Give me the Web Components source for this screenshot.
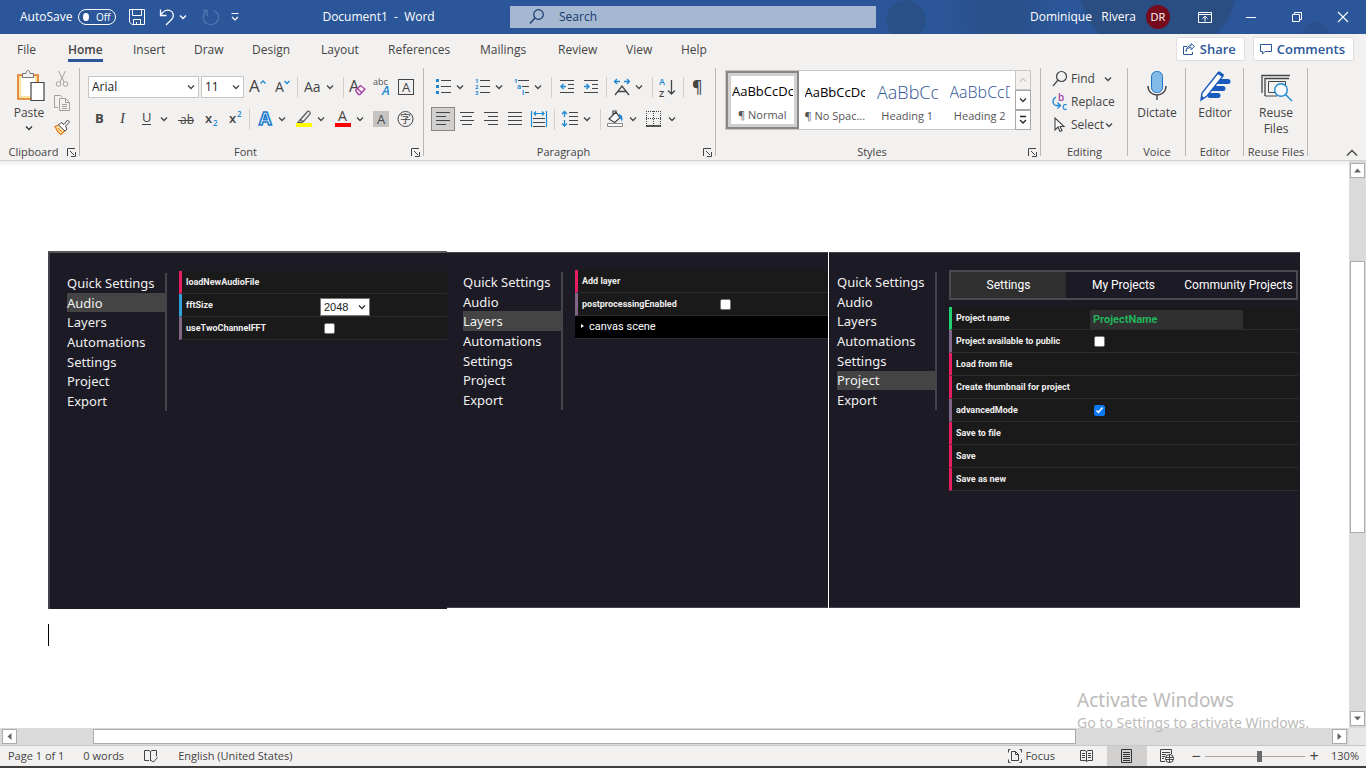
<!DOCTYPE html>
<html lang="en">
<head>
<meta charset="utf-8">
<title>Document1 - Word</title>
<style>
html,body{margin:0;height:100%}
body{font:12px/16px "Open Sans","Noto Sans",sans-serif;color:#444;background:#fff;overflow:hidden}
</style>
</head>
<body>
<word-app></word-app>
<script>
const define = (name, css, html, setup) => customElements.define(name, class extends HTMLElement {
  connectedCallback() {
    if (this.shadowRoot) return;
    const root = this.attachShadow({ mode: 'open' });
    const t = document.createElement('template');
    t.innerHTML = `<style>*{box-sizing:border-box}button,input,select{font:inherit;color:inherit;margin:0}${css}</style>` +
      (typeof html === 'function' ? html(this) : html);
    root.append(t.content.cloneNode(true));
    if (setup) setup(this, root);
  }
});

const S = 'fill="none" stroke="#444"', B = '#1e88d2';
const lines = (...l) => `<path ${S} d="${l.map(([x, y, w]) => `M${x} ${y}.5h${w}`).join('')}"/>`;
/* name: [width, height, markup] */
const ICONS = {
  save: [18, 18, `<path fill="none" stroke="#fff" d="M1.500 1.500h15v15h-12.500l-2.500-2.500zM4.500 1.500v6h9v-6M5.500 16.500v-5h7v5M8.500 14v2.500"/>`],
  undo: [18, 18, `<path fill="none" stroke="#fff" stroke-width="1.300" d="M2.500 1.500v6h6M2.500 7.500C5 3 9 1.500 12 2.500c4 1.500 4 6 2 8.500L8 17"/>`],
  redo: [18, 18, `<path fill="none" stroke="#4f75b0" stroke-width="1.300" d="M5 3C0 6 0 14 6 16c6 2 11-2 10.500-7.500C16 5.500 14 3.500 12 3M5 8V2.500H1"/>`],
  chevw: [10, 8, `<path fill="none" stroke="#fff" stroke-width="1.400" d="M2 2.500l3 3 3-3"/>`],
  custom: [10, 10, `<path fill="none" stroke="#fff" stroke-width="1.200" d="M1.500 1.500h7M2 5l3 3 3-3"/>`],
  search: [16, 16, `<g fill="none" stroke="#17386e" stroke-width="1.200"><circle cx="9.500" cy="5.500" r="4.800"/><path d="M6 9L1 14.500"/></g>`],
  ribbonopt: [14, 12, `<path fill="none" stroke="#fff" d="M.5 1.500h13v10H.5zM.5 3.500h13M7 10.500V5.500M4.500 7.500L7 5.200l2.500 2.300"/>`],
  min: [12, 12, `<path stroke="#fff" d="M1 6.500h10"/>`],
  restore: [12, 12, `<path fill="none" stroke="#fff" d="M1.500 3.500h7v7h-7zM3.500 3.500v-2h7v7h-2"/>`],
  close: [12, 12, `<path stroke="#fff" stroke-width="1.100" d="M1 1l10 10M11 1L1 11"/>`],
  share: [12, 12, `<path fill="none" stroke="#2b579a" d="M4 3.500H.5v8h9V9M3 8.500c.5-3 2.500-4 5-4v2.200l3.500-3.200L8 .6v2C5 2.600 3.500 5 3 8.500z"/>`],
  comment: [12, 12, `<path fill="none" stroke="#2b579a" d="M.5 1.500h11v7H5l-2.500 2.500V8.500h-2z"/>`],
  chev: [12, 24, `<path ${S} stroke-width="1.300" d="M2 10.500l3 3 3-3"/>`],
  chevs: [12, 12, `<path ${S} stroke-width="1.300" d="M2 4.500l3 3 3-3"/>`],
  paste: [30, 32, `<path fill="#fbe3a5" stroke="#e07a1c" stroke-width="1.600" d="M4 5h20v24H4z"/><path fill="#fff" d="M7 8h14v18H7z"/><path fill="#f3f1f0" stroke="#777" d="M8.500 7.500v-4h3.500c0-4 4-4 4 0h3.500v4z"/><path fill="#fff" stroke="#444" stroke-width="1.200" d="M17 12.500h13v18H17z"/>`],
  cut: [16, 18, `<g fill="none" stroke="#a3a1a0"><path d="M4.500 1l5.500 11M11.500 1L6 12"/><circle cx="4.500" cy="14" r="2.300"/><circle cx="11.500" cy="14" r="2.300"/></g>`],
  copy: [18, 18, `<g fill="none" stroke="#a3a1a0"><path d="M5 13.500H1.500V1.500h6l2 2"/><path d="M6.500 4.500h6l4 4v8h-10zM12.500 4.500v4h4M9 10.500h5M9 12.500h5M9 14.500h5"/></g>`],
  painter: [18, 18, `<path fill="#fbe3a5" stroke="#e07a1c" stroke-width="1.300" d="M2 8.500l5-2 5.500 5.500L8 16.500c-2-1-4-4-6-8z"/><path fill="#fff" stroke="#444" d="M5.500 7L8 4.500l3 2L14.500 2l2 2L12.500 8l1.500 3-2 2z"/><path stroke="#e07a1c" d="M5 10l4 4"/>`],
  grow: [24, 24, `<text x="3" y="17" font-size="17">A</text><path fill="none" stroke="${B}" stroke-width="1.400" d="M14.500 8.500L17 6l2.500 2.500"/>`],
  shrink: [24, 24, `<text x="5" y="17" font-size="14">A</text><path fill="none" stroke="${B}" stroke-width="1.400" d="M14.500 6L17 8.500 19.500 6"/>`],
  case: [24, 24, `<text x="3" y="17" font-size="14">Aa</text>`],
  clear: [24, 24, `<text x="2" y="17" font-size="16">A</text><path fill="#f3f1f0" stroke="#a33ea1" stroke-width="1.300" d="M8.500 15.500l5-5 4.500 3.500-5 5.500h-1.500zM10.500 13.500l4 4"/>`],
  phonetic: [24, 24, `<text x="2" y="10" font-size="9" fill="#555">abc</text><text x="11" y="20" font-size="13" font-style="italic" font-weight="600" fill="${B}">A</text>`],
  boxa: [24, 24, `<rect x="3.500" y="4.500" width="15" height="15" ${S}/><text x="7" y="17" font-size="13">A</text>`],
  bold: [24, 24, `<text x="8" y="16" font-size="13" font-weight="700">B</text>`],
  italic: [24, 24, `<text x="9" y="16" font-size="15" font-style="italic" font-family="Liberation Serif">I</text>`],
  under: [24, 24, `<text x="7" y="15" font-size="13">U</text><path stroke="#444" d="M7 17.500h9"/>`],
  strike: [24, 24, `<text x="6" y="17" font-size="12">ab</text><path stroke="#444" d="M4 13.500h16"/>`],
  sub: [24, 24, `<text x="7" y="16" font-size="13" font-weight="600">x</text><text x="15" y="19" font-size="8" font-weight="600" fill="${B}">2</text>`],
  sup: [24, 24, `<text x="7" y="16" font-size="13" font-weight="600">x</text><text x="15" y="10" font-size="8" font-weight="600" fill="${B}">2</text>`],
  fx: [24, 24, `<text x="6" y="18" font-size="18" font-weight="700" fill="#fff" stroke="#1c7cd0" stroke-width="1.600">A</text>`],
  mark: [24, 24, `<path fill="#f3f1f0" stroke="#555" stroke-width="1.200" d="M9 12l6.500-7.500c1-1 3.500.5 2.500 2.500L12 14H9zM8.500 12L6 15.500h4l2-1.500"/><path fill="#ff0" d="M4 16h16v4H4z"/>`],
  color: [24, 24, `<text x="7" y="14" font-size="14">A</text><path fill="#f00" d="M4 16h16v4H4z"/>`],
  shade: [24, 24, `<path fill="#c6c4c3" d="M3 4h16v16H3z"/><text x="7" y="17" font-size="13">A</text>`],
  enclose: [24, 24, `<circle cx="11.500" cy="12" r="7.500" ${S}/><text x="6" y="16" font-size="11" font-family="Noto Sans CJK SC">字</text>`],
  bullets: [24, 24, `<path fill="${B}" d="M5 4h3v3H5zM5 10h3v3H5zM5 16h3v3H5z"/>${lines([10, 5, 10], [10, 11, 10], [10, 17, 10])}`],
  numbers: [24, 24, `<g font-size="6" font-weight="700"><text x="5" y="8" fill="${B}">1</text><text x="5" y="14" fill="${B}">2</text><text x="5" y="20" fill="${B}">3</text></g>${lines([10, 5, 10], [10, 11, 10], [10, 17, 10])}`],
  levels: [24, 24, `<text x="5" y="8" font-size="6" font-weight="700" fill="${B}">1</text><text x="8" y="14" font-size="7" font-weight="700" fill="${B}">a</text><text x="13" y="20" font-size="7" font-weight="700" fill="${B}">i</text>${lines([9, 5, 11], [13, 11, 7], [16, 17, 4])}`],
  outdent: [24, 24, `${lines([5, 5, 14], [13, 9, 6], [13, 13, 6], [5, 17, 14])}<path fill="none" stroke="${B}" stroke-width="1.400" d="M11 11.500H6M8.500 9L6 11.500 8.500 14"/>`],
  indent: [24, 24, `${lines([5, 5, 14], [13, 9, 6], [13, 13, 6], [5, 17, 14])}<path fill="none" stroke="${B}" stroke-width="1.400" d="M5 11.500h5M7.500 9l2.500 2.500L7.500 14"/>`],
  asian: [24, 24, `<path fill="none" stroke="#444" stroke-width="1.300" d="M5 20l7-9 7 9M8 16.500h8"/><path fill="none" stroke="${B}" stroke-width="1.300" d="M10 6.500H4.500M7 4L4.500 6.500 7 9M14 6.500h5.500M17 4l2.500 2.500L17 9"/>`],
  sort: [24, 24, `<text x="3" y="10" font-size="9" font-weight="600" fill="${B}">A</text><text x="3" y="22" font-size="9" font-weight="600">Z</text><path fill="none" stroke="#444" stroke-width="1.300" d="M15.500 5v14M12 15.500l3.500 3.500 3.500-3.500"/>`],
  pilcrow: [24, 24, `<text x="5" y="17" font-size="16" font-weight="600">¶</text>`],
  left: [24, 24, lines([5, 5, 14], [5, 9, 10], [5, 13, 14], [5, 17, 10])],
  center: [24, 24, lines([5, 5, 14], [7, 9, 10], [5, 13, 14], [7, 17, 10])],
  right: [24, 24, lines([5, 5, 14], [9, 9, 10], [5, 13, 14], [9, 17, 10])],
  justify: [24, 24, lines([5, 5, 14], [5, 9, 14], [5, 13, 14], [5, 17, 14])],
  distribute: [24, 24, `${lines([6, 11, 12], [6, 15, 12], [6, 19, 12])}<path fill="none" stroke="${B}" stroke-width="1.200" d="M4.500 4v16M19.500 4v16M7 6.500h10M9 4.500L7 6.500l2 2M15 4.500l2 2-2 2"/>`],
  spacing: [24, 24, `${lines([11, 5, 9], [11, 9, 9], [11, 13, 9], [11, 17, 9])}<path fill="none" stroke="${B}" stroke-width="1.300" d="M6.500 5v5M4 7l2.500-2.500L9 7M6.500 13v6M4 16.500L6.500 19 9 16.500"/>`],
  bucket: [24, 24, `<path fill="#fff" stroke="#444" stroke-width="1.200" d="M5 12l7-7 4 6-5.500 4.500zM9 7.500V4h3v3"/><path fill="${B}" d="M15 7c4 1 4 5 3 8-1-2-1-4-3-5z"/><path fill="#fff" stroke="#888" d="M3.500 16.500h15v3h-15z"/>`],
  borders: [24, 24, `<path fill="none" stroke="#444" stroke-dasharray="1 1" d="M3 4.500h15M3.500 4v15M17.500 4v15M10.500 4v15M3 11.500h15"/><path stroke="#222" stroke-width="1.500" d="M3 19h15"/>`],
  launch: [9, 9, `<path ${S} d="M.5 8V.5H8M3 3l4 4M8.500 4v4.500H4"/>`],
  find: [16, 18, `<g ${S} stroke-width="1.200"><circle cx="9.500" cy="6.500" r="5"/><path d="M6 10L1 16"/></g>`],
  replace: [16, 18, `<text x="6" y="8" font-size="10" font-weight="600" fill="#a33ea1">b</text><text x="10" y="17" font-size="10" font-weight="600" fill="${B}">c</text><path fill="none" stroke="${B}" stroke-width="1.300" d="M4 4C0 6 0 11 4 12.500h4M5.500 9.500l3 3-3 3"/>`],
  select: [16, 18, `<path fill="#fff" stroke="#444" stroke-width="1.100" d="M3 2v12l3-3 2 4.500 2-1-2-4h4z"/>`],
  mic: [20, 32, `<rect x="4.500" y="1.500" width="11" height="21" rx="5" fill="#83bbe8" stroke="#1e74c4"/><path ${S} stroke-width="1.400" d="M1 16c0 12 18 12 18 0M10 25v5"/>`],
  editor: [32, 32, `<path stroke="#185abd" stroke-width="5" stroke-linecap="round" d="M17 11.500h12M14 18.500h10M11 25.500h8"/><path fill="#fff" stroke="#185abd" stroke-width="1.400" d="M19 3l5 3L8 26l-6 4 1-7z"/><path fill="#185abd" d="M20 1l5 3.500-2 2.500-5-3.500zM2 30l1-4 2.500 2z"/>`],
  reuse: [32, 32, `<path ${S} stroke-width="1.300" d="M2 23V5.500h28M5 26V8.500h24"/><path ${S} d="M5 26h12M8.500 22.500V11.500h17v11z"/><circle cx="21" cy="20" r="6.300" fill="#f8fbff" stroke="${B}" stroke-width="1.400"/><path stroke="${B}" stroke-width="1.400" d="M25.500 24.500L32 31"/>`],
  up: [12, 8, `<path ${S} stroke-width="1.300" d="M1 6.500l5-5 5 5"/>`],
  gup: [8, 6, `<path fill="none" stroke="#aaa" d="M1 4.500l3-3 3 3"/>`],
  gdown: [8, 6, `<path fill="none" stroke="#333" stroke-width="1.300" d="M1 1.500l3 3 3-3"/>`],
  gmore: [8, 10, `<path fill="none" stroke="#222" stroke-width="1.300" d="M1 1.500h6M1 5l3 3 3-3"/>`],
  tu: [9, 9, `<path fill="#666" d="M1 6.500h7L4.500 2.500z"/>`],
  td: [9, 9, `<path fill="#666" d="M1 2.500h7L4.500 6.500z"/>`],
  tl: [9, 9, `<path fill="#666" d="M6.500 1v7L2.500 4.500z"/>`],
  tr: [9, 9, `<path fill="#666" d="M2.500 1v7l4-3.500z"/>`],
  proof: [16, 14, `<path ${S} d="M7.500 2.500L6 1.500H1.500v10H6M7.500 11.500v-9l1.500-1h4.500v6M7 11.500h1l2.500 1.500 4-4.500"/>`],
  focus: [16, 14, `<path ${S} d="M3.500.5h-2v3M12.500.5h2v3M3.500 13.500h-2v-3M12.500 13.500h2v-3M4.500 2.500h4l3 3v6h-7zM8.500 2.500v3h3"/>`],
  read: [16, 14, `<path ${S} d="M7.500 12.500v-10L6 1.500H1.500v10H6zM7.500 12.500l1.500-1h4.500v-10H9l-1.500 1M3 4.500h3M3 6.500h3M3 8.500h3M9 4.500h3M9 6.500h3M9 8.500h3"/>`],
  print: [14, 14, `<path fill="none" stroke="#333" d="M1.500.5h10v13h-10zM3 3.500h7M3 5.500h7M3 7.500h7M3 9.500h7M3 11.500h7"/>`],
  web: [16, 14, `<path ${S} d="M6 12.500H1.500V.5h11V5M3 3.500h8M3 5.500h4M3 7.500h3M3 9.500h2"/><circle cx="10.500" cy="9.500" r="4" fill="#fff" stroke="#333"/><path ${S} d="M6.500 8.500h8M6.500 10.500h8M10.500 5.500v8"/>`]
};

define('ui-icon', `:host{display:block;flex:none}svg{display:block;overflow:visible;fill:#444}`,
  el => {
    const [w, h, body] = ICONS[el.getAttribute('name')];
    return `<svg width="${w}" height="${h}" viewBox="0 0 ${w} ${h}" font-family="Open Sans,sans-serif" aria-hidden="true">${body}</svg>`;
  });

define('tool-button', `:host{display:block;flex:none}
  button{display:grid;place-items:center;width:24px;height:24px;padding:0;border:0;background:none}
  :host([narrow]) button{width:12px;margin-right:3px}
  :host([pressed]) button{background:#d2d0ce;outline:1px solid #8a8886;outline-offset:-1px}
  :host([wide]) button{width:46px;height:34px}`,
  el => `<button aria-label="${el.getAttribute('label') || el.getAttribute('icon')}"><ui-icon name="${el.getAttribute('icon')}"></ui-icon></button>`);

define('tool-rule', `:host{display:block;flex:none;width:7px;height:21px;background:linear-gradient(#d2d0ce,#d2d0ce) center/1px 100% no-repeat}`, '');

define('title-bar', `:host{display:grid;grid-template-columns:1fr 366px 1fr;align-items:center;height:34px;padding-left:20px;flex:none;color:#fff;
    background:radial-gradient(circle at 906px 20px,#2a5088 19px,transparent 21px),radial-gradient(circle at 1000px 10px,#2a508a 20px,transparent 60px),radial-gradient(circle at 1158px -20px,#2a4d82 78px,transparent 82px),radial-gradient(circle at 1316px 36px,#2a5090 14px,transparent 15px),#2b579a}
  .side{display:flex;align-items:center}
  .auto{display:flex;align-items:center;gap:6px}
  .switch{display:flex;align-items:center;gap:7px;width:38px;height:16px;padding:0 5px 0 4px;border:1px solid #fff;border-radius:8px;background:none;font-size:10px;line-height:14px}
  .switch i{width:8px;height:8px;border-radius:50%;background:#fff}
  .quick{display:grid;grid-template-columns:30px 20px 24px 28px 14px;align-items:center;margin-left:12px}
  h1{font:inherit;margin:0 0 0 78px;white-space:pre}
  .search{display:flex;align-items:center;gap:14px;height:22px;padding-left:19px;background:#a5b8d2}
  input{flex:1;min-width:0;border:0;padding:0;background:none;color:#17386e;outline:0;line-height:20px}
  input::placeholder{color:#17386e;opacity:1}
  .right{justify-content:flex-end}
  .name{white-space:pre;margin-right:10px}
  .avatar{display:grid;place-items:center;width:24px;height:24px;margin-right:12px;border-radius:50%;background:#750b1c;font-size:11px}`,
  `<div class="side"><span class="auto"><span id="as">AutoSave</span><button class="switch" aria-labelledby="as"><i></i>Off</button></span>
    <span class="quick"><ui-icon name="save"></ui-icon><ui-icon name="undo"></ui-icon><ui-icon name="chevw"></ui-icon><ui-icon name="redo"></ui-icon><ui-icon name="custom"></ui-icon></span>
    <h1>Document1  -  Word</h1></div>
  <label class="search"><ui-icon name="search"></ui-icon><input type="text" placeholder="Search" aria-label="Search"></label>
  <div class="side right"><span class="name">Dominique   Rivera</span><span class="avatar">DR</span>
    <tool-button wide icon="ribbonopt" label="Ribbon display options"></tool-button><tool-button wide icon="min" label="Minimize"></tool-button><tool-button wide icon="restore" label="Restore"></tool-button><tool-button wide icon="close" label="Close"></tool-button></div>`);

define('ribbon-tabs', `:host{display:flex;justify-content:space-between;height:30px;flex:none;padding:0 12px 0 17px;background:#f3f1f0}
  nav{display:grid;grid-template-columns:51px 65px 61px 58px 69px 67px 92px 78px 68px 55px 40px}
  a{color:#444;text-decoration:none;line-height:25px;padding-top:3px;height:28px;justify-self:start}
  a[aria-current]{font-weight:600;border-bottom:3px solid #2b579a}
  .actions{display:flex;gap:8px;padding-top:3px}
  button{display:flex;align-items:center;gap:5px;height:24px;padding:0 8px 0 6px;border:1px solid #e1dfdd;border-radius:2px;background:#fff;color:#2b579a;font-size:13px;font-weight:600;white-space:nowrap}`,
  `<nav>${['File', 'Home', 'Insert', 'Draw', 'Design', 'Layout', 'References', 'Mailings', 'Review', 'View', 'Help'].map(t => `<a href="#"${t === 'Home' ? ' aria-current="page"' : ''}>${t}</a>`).join('')}</nav>
  <div class="actions"><button><ui-icon name="share"></ui-icon>Share</button><button><ui-icon name="comment"></ui-icon>Comments</button></div>`);

define('ribbon-group', `:host{display:flex;flex-direction:column;height:92px;background:linear-gradient(#b9b7b6,#b9b7b6) right top/1px 88px no-repeat}
  .body{flex:1;min-height:0}
  .foot{display:flex;align-items:center;height:16px;font-size:11px;white-space:nowrap}
  .foot span{flex:1;text-align:center}
  .foot button{border:0;background:none;padding:0;margin-right:4px}`,
  el => `<div class="body"><slot></slot></div><div class="foot"><span>${el.getAttribute('label')}</span>${el.hasAttribute('launcher') ? `<button aria-label="${el.getAttribute('label')} options"><ui-icon name="launch"></ui-icon></button>` : ''}</div>`);

const tools = (...names) => names.map(n => n === '|' ? '<tool-rule></tool-rule>' : n === 'v' ? '<tool-button narrow icon="chev" label="More"></tool-button>' :
  n === 'left' ? '<tool-button pressed icon="left"></tool-button>' : `<tool-button icon="${n}"></tool-button>`).join('');

define('big-button', `:host{display:block}button{display:flex;flex-direction:column;align-items:center;width:100%;padding:0;border:0;background:none;line-height:16px}
  ui-icon{margin-bottom:3px}`,
  el => `<button><ui-icon name="${el.getAttribute('icon')}"></ui-icon><slot></slot></button>`);

define('style-gallery', `:host{display:flex;height:60px;border:1px solid #c8c6c4;background:#fff}
  .item{flex:1;min-width:0;height:58px;padding:3px 6px 0;border:0;background:none;overflow:hidden;white-space:nowrap}
  .item[aria-pressed=true]{border:2px solid #8a8886;outline:3px solid #d2d0ce;outline-offset:-5px;padding:1px 4px 0}
  .sample{display:block;height:28px;line-height:28px;overflow:hidden;text-align:left;color:#000;font-size:13px}
  .name{display:block;height:20px;line-height:20px;color:#555;font-size:11px;text-align:center}
  .h1,.h2{color:#2f5496;font-size:18px;font-weight:300}.h2{font-size:16px}
  .keys{display:grid;width:16px;flex:none;margin:-1px;grid-template-rows:repeat(3,20px)}
  .keys button{display:grid;place-items:center;padding:0;border:1px solid #aaa8a6;background:#fff}
  .keys button:first-child{background:#f3f1f0;border-color:#c8c6c4}`,
  [['', '¶ Normal'], ['', '¶ No Spac...'], ['h1', 'Heading 1'], ['h2', 'Heading 2']].map(([c, n], i) =>
    `<button class="item" aria-pressed="${i === 0}"><span class="sample ${c}">AaBbCcDc</span><span class="name">${n}</span></button>`).join('') +
  `<span class="keys"><button aria-label="Previous"><ui-icon name="gup"></ui-icon></button><button aria-label="Next"><ui-icon name="gdown"></ui-icon></button><button aria-label="All styles"><ui-icon name="gmore"></ui-icon></button></span>`);

define('word-ribbon', `:host{display:grid;grid-template-columns:80px 344px 292px 325px 87px 58px 58px 64px 1fr;flex:none;padding-top:4px;background:#f3f1f0;border-bottom:1px solid #d2d0ce}
  .rows{display:grid;gap:8px;padding:7px 0 0 7px}
  .row{display:flex;align-items:center;height:24px}
  .combo{position:relative;display:flex;height:22px;background:#fff;border:1px solid #c8c6c4}
  .combo select{appearance:none;flex:1;min-width:0;border:0;background:none;padding:0 3px;color:#222;line-height:18px}
  .combo ui-icon{position:absolute;right:0;top:-2px;pointer-events:none}
  .face{width:111px;margin:0 2px 0 1px}.size{width:43px;margin-right:2px}
  .clip{display:grid;grid-template-columns:48px 16px;padding:2px 0 0 5px}
  .clip div{display:grid;grid-template-rows:repeat(3,24px);justify-items:center}
  .gallery{padding:2px 10px 0 9px}
  .edit{display:grid;grid-template-rows:22px 24px 22px;padding-left:11px}
  .edit button{display:grid;grid-template-columns:19px auto 12px;justify-content:start;align-items:center;border:0;background:none;padding:0;text-align:left}
  .edit button:first-child{grid-template-columns:19px 32px 12px}
  .fold{justify-self:end;align-self:end;padding:0;margin:0 8px 3px 0;border:0;background:none}
  big-button{padding-top:2px}.clip big-button{padding-top:0}
  .drop{margin:4px auto 0}`,
  `<ribbon-group label="Clipboard" launcher><div class="clip"><big-button icon="paste">Paste<ui-icon class="drop" name="gdown"></ui-icon></big-button>
    <div><ui-icon name="cut"></ui-icon><ui-icon name="copy"></ui-icon><ui-icon name="painter"></ui-icon></div></div></ribbon-group>
  <ribbon-group label="Font" launcher><div class="rows"><div class="row">
    <span class="combo face"><select aria-label="Font"><option>Arial</option></select><ui-icon name="chev"></ui-icon></span>
    <span class="combo size"><select aria-label="Font size"><option>11</option></select><ui-icon name="chev"></ui-icon></span>
    ${tools('grow', 'shrink', '|', 'case', 'v', '|', 'clear', 'phonetic', 'boxa')}</div>
    <div class="row">${tools('bold', 'italic', 'under', 'v', 'strike', 'sub', 'sup', '|', 'fx', 'v', 'mark', 'v', 'color', 'v', 'shade', 'enclose')}</div></div></ribbon-group>
  <ribbon-group label="Paragraph" launcher><div class="rows">
    <div class="row">${tools('bullets', 'v', 'numbers', 'v', 'levels', 'v', '|', 'outdent', 'indent', '|', 'asian', 'v', '|', 'sort', '|', 'pilcrow')}</div>
    <div class="row">${tools('left', 'center', 'right', 'justify', 'distribute', '|', 'spacing', 'v', '|', 'bucket', 'v', 'borders', 'v')}</div></div></ribbon-group>
  <ribbon-group label="Styles" launcher><div class="gallery"><style-gallery></style-gallery></div></ribbon-group>
  <ribbon-group label="Editing"><div class="edit"><button><ui-icon name="find"></ui-icon>Find<ui-icon name="chevs"></ui-icon></button><button><ui-icon name="replace"></ui-icon>Replace</button><button><ui-icon name="select"></ui-icon>Select<ui-icon name="chevs"></ui-icon></button></div></ribbon-group>
  <ribbon-group label="Voice"><big-button icon="mic">Dictate</big-button></ribbon-group>
  <ribbon-group label="Editor"><big-button icon="editor">Editor</big-button></ribbon-group>
  <ribbon-group label="Reuse Files"><big-button icon="reuse">Reuse<br>Files</big-button></ribbon-group>
  <button class="fold" aria-label="Collapse the ribbon"><ui-icon name="up"></ui-icon></button>`);

define('setting-row', `:host{display:grid;grid-template-columns:134px 1fr;align-items:center;flex:1;min-height:23px;padding-left:4px;border-left:3px solid var(--tone,#e61d5f);border-bottom:1px solid #2c2c2c;background:#1a1a1a;
    font:bold 9px/12px Roboto,Arial,sans-serif;color:#eee}
  :host([tone=check]){--tone:#806787}:host([tone=option]){--tone:#2fa1d6}:host([tone=text]){--tone:#1ed36f}
  span{white-space:nowrap}`,
  `<span><slot></slot></span><slot name="control"></slot>`);

define('check-box', `:host{display:block}input{display:block;width:11px;height:11px;margin:0 0 0 4px;appearance:none;background:#fff;border:1px solid #767676;border-radius:2px}
  input:checked{background:#0b78f0 url("data:image/svg+xml,%3Csvg xmlns='http://www.w3.org/2000/svg' viewBox='0 0 9 9'%3E%3Cpath d='M1.500 4.500l2 2 4-5' fill='none' stroke='white' stroke-width='1.500'/%3E%3C/svg%3E");border-color:#0b78f0}`,
  el => `<input type="checkbox" aria-label="${el.getAttribute('label')}"${el.hasAttribute('checked') ? ' checked' : ''}>`);

define('settings-panel', `:host{display:grid;grid-template-columns:100px minmax(0,1fr);gap:12px;align-items:start;min-width:0;background:#1c1a24;padding:var(--pad);height:356px}
  nav{display:flex;flex-direction:column;height:138px;margin-top:2px;border-right:2px solid #45444b}
  a{flex:1;display:flex;align-items:center;color:#f0f0f0;text-decoration:none;font:13px/16px "Noto Sans",sans-serif;white-space:nowrap}
  a[aria-current]{background:#444}
  .main{display:flex;flex-direction:column;min-width:0}`,
  el => `<nav>${['Quick Settings', 'Audio', 'Layers', 'Automations', 'Settings', 'Project', 'Export'].map(t => `<a href="#"${t === el.getAttribute('active') ? ' aria-current="page"' : ''}>${t}</a>`).join('')}</nav><div class="main"><slot></slot></div>`);

define('scroll-bar', `:host{display:flex;flex:none;background:#dadada}
  :host([vertical]){flex-direction:column}
  button{display:grid;place-items:center;flex:none;width:15px;height:15px;padding:0;border:1px solid #ababab;background:#fff}
  .track{flex:1;display:flex;min-width:0;min-height:0}
  :host([vertical]) .track{flex-direction:column}
  .a{flex:var(--before)}.thumb{flex:var(--thumb);background:#fff;border:1px solid #ababab}.b{flex:var(--after)}`,
  el => { const v = el.hasAttribute('vertical'); return `<button aria-label="Scroll ${v ? 'up' : 'left'}"><ui-icon name="${v ? 'tu' : 'tl'}"></ui-icon></button><div class="track"><div class="a"></div><div class="thumb"></div><div class="b"></div></div><button aria-label="Scroll ${v ? 'down' : 'right'}"><ui-icon name="${v ? 'td' : 'tr'}"></ui-icon></button>`; });

define('word-document', `:host{position:relative;display:grid;grid-template-columns:minmax(0,1fr) 17px;grid-template-rows:minmax(0,1fr) 17px;flex:1;min-height:0;background:#e6e6e6}
  .page{padding:90px 49px 0 48px;overflow:hidden;background:linear-gradient(#eee,#fff 6px)}
  .shots{display:grid;grid-template-columns:399fr 381fr 472fr;align-items:center}
  settings-panel{border-top:1px solid #44434b;border-bottom:1px solid #44434b}
  .one{height:358px;border-top:2px solid #56565a;border-left:2px solid #44434b;border-bottom:0;--pad:18px 0 0 17px}
  .two{--pad:17px 0 0 16px}
  .three{margin-left:1px;--pad:17px 2px 0 8px}
  .caret{width:1px;height:22px;margin-top:15px;background:#000}
  .pick{position:relative;display:block;width:50px;background:#fff;margin-top:3px}
  select{appearance:none;display:block;width:50px;height:18px;padding:0 3px;border:1px solid #767676;background:#fff;color:#222;font:11px/16px "Liberation Sans",sans-serif}
  .pick ui-icon{position:absolute;right:4px;top:6px;pointer-events:none}
  .scene{display:flex;align-items:center;gap:5px;height:23px;padding-left:6px;border:0;border-bottom:1px solid #2c2c2c;background:#000;color:#fff;font:11px/14px Roboto,sans-serif}
  .scene i{border:2px solid transparent;border-left:3px solid #fff;border-right:0;margin-bottom:2px}
  .tabs{display:grid;grid-template-columns:repeat(3,1fr);height:30px;margin-bottom:7px;border:2px solid #4b4a50}
  .tabs button{border:0;padding:0;background:none;color:#fff;font:12px/16px Roboto,sans-serif;white-space:nowrap}
  .tabs button[aria-selected=true]{background:#2f2f2f}
  .rows{display:flex;flex-direction:column}
  .text{justify-self:start;width:153px;max-width:100%;height:19px;margin-top:3px;padding:0 3px;border:0;background:#303030;color:#22b35c;font:bold 11px/18px Roboto,sans-serif}
  scroll-bar[vertical]{--before:83 83 0;--thumb:272 272 0;--after:179 179 0;padding:2px 1px}
  .h{--before:76 76 0;--thumb:983 983 0;--after:257 257 0;padding:1px 2px}`,
  `<main class="page"><div class="shots">
    <settings-panel class="one" active="Audio"><setting-row>loadNewAudioFile</setting-row><setting-row tone="option">fftSize<span class="pick" slot="control"><select aria-label="fftSize"><option>2048</option></select><ui-icon name="gdown"></ui-icon></span></setting-row><setting-row tone="check">useTwoChannelFFT<check-box slot="control" label="useTwoChannelFFT"></check-box></setting-row></settings-panel>
    <settings-panel class="two" active="Layers"><setting-row>Add layer</setting-row><setting-row tone="check">postprocessingEnabled<check-box slot="control" label="postprocessingEnabled"></check-box></setting-row><button class="scene"><i></i>canvas scene</button></settings-panel>
    <settings-panel class="three" active="Project"><div class="tabs" role="tablist"><button role="tab" aria-selected="true">Settings</button><button role="tab">My Projects</button><button role="tab">Community Projects</button></div>
      <div class="rows"><setting-row tone="text">Project name<input class="text" slot="control" type="text" value="ProjectName" aria-label="Project name"></setting-row><setting-row tone="check">Project available to public<check-box slot="control" label="Project available to public"></check-box></setting-row><setting-row>Load from file</setting-row><setting-row>Create thumbnail for project</setting-row><setting-row tone="check">advancedMode<check-box slot="control" checked label="advancedMode"></check-box></setting-row><setting-row>Save to file</setting-row><setting-row>Save</setting-row><setting-row>Save as new</setting-row></div></settings-panel>
  </div><div class="caret"></div></main>
  <scroll-bar vertical></scroll-bar><scroll-bar class="h"></scroll-bar><div></div>`);

define('status-bar', `:host{display:flex;justify-content:space-between;flex:none;height:23px;background:#f3f1f0;border-top:1px solid #c8c6c4;border-bottom:2px solid #3f3f3f;font-size:11px;line-height:20px;white-space:nowrap}
  div{display:flex;align-items:center}
  .l{gap:19px;padding-left:8px}
  .r{padding-right:7px}
  button{display:flex;align-items:center;justify-content:center;gap:2px;height:20px;padding:0;border:0;background:none}
  .view{width:40px}.view[aria-pressed=true]{background:#d2d0ce}
  .focus{margin-right:12px}
  .z{width:18px;font-size:16px}
  input{appearance:none;width:100px;height:20px;background:linear-gradient(#a6a4a3,#a6a4a3) center/100% 1px no-repeat}
  input::-webkit-slider-thumb{appearance:none;width:5px;height:11px;background:#6a6a6a}
  output{width:36px;text-align:right}`,
  `<div class="l"><span>Page 1 of 1</span><span>0 words</span><ui-icon name="proof"></ui-icon><span>English (United States)</span></div>
  <div class="r"><button class="focus"><ui-icon name="focus"></ui-icon>Focus</button><button class="view" aria-label="Read mode"><ui-icon name="read"></ui-icon></button><button class="view" aria-pressed="true" aria-label="Print layout"><ui-icon name="print"></ui-icon></button><button class="view" aria-label="Web layout"><ui-icon name="web"></ui-icon></button>
  <button class="z" aria-label="Zoom out">−</button><input type="range" min="0" max="100" value="55" aria-label="Zoom"><button class="z" aria-label="Zoom in">+</button><output>130%</output></div>`);

define('activation-note', `:host{position:absolute;right:57px;bottom:35px;color:#bdbbba;font-family:"Noto Sans",sans-serif;pointer-events:none;white-space:nowrap}
  p{margin:0;font-size:14px;line-height:20px}.big{font-size:19px;line-height:26px}`,
  `<p class="big">Activate Windows</p><p>Go to Settings to activate Windows.</p>`);

define('word-app', `:host{display:flex;flex-direction:column;height:100vh;min-height:640px;position:relative}`,
  `<title-bar></title-bar><ribbon-tabs></ribbon-tabs><word-ribbon></word-ribbon><word-document></word-document><status-bar></status-bar><activation-note></activation-note>`);
</script>
</body>
</html>
